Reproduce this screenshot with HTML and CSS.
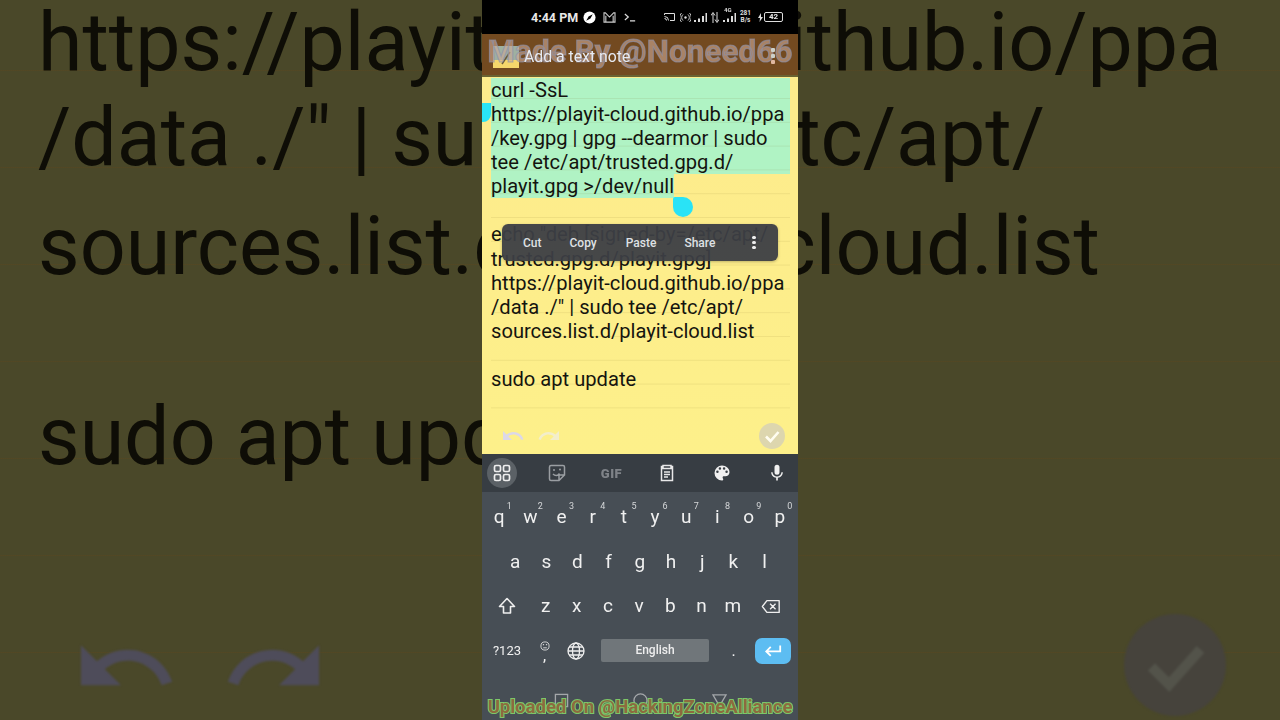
FILE: index.html
```html
<!DOCTYPE html>
<html lang="en">
<head>
<meta charset="utf-8">
<title>Add a text note</title>
<link rel="stylesheet" href="styles.css">
</head>
<body>
<div class="stage">
  <aside class="side side-left">
    <div class="bg-row bg-row1">https://playit</div>
    <div class="bg-row bg-row2">/data ./" | su</div>
    <div class="bg-row bg-row3">sources.list.d</div>
    <div class="bg-row bg-row4">sudo apt upd</div>
    <div class="bg-tools">
      <svg class="bg-icon" viewBox="0 0 24 24"><path d="M12.5 8c-2.65 0-5.05.99-6.9 2.6L2 7v9h9l-3.62-3.62c1.39-1.16 3.16-1.88 5.12-1.88 3.54 0 6.55 2.31 7.6 5.5l2.37-.78C21.08 11.03 17.15 8 12.5 8z"/></svg>
      <svg class="bg-icon" viewBox="0 0 24 24"><path d="M18.4 10.6C16.55 8.99 14.15 8 11.5 8c-4.65 0-8.58 3.03-9.96 7.22L3.9 16c1.05-3.19 4.05-5.5 7.6-5.5 1.95 0 3.73.72 5.12 1.88L13 16h9V7l-3.6 3.6z"/></svg>
    </div>
  </aside>

  <main class="phone">
    <div class="status">
      <span class="time">4:44 PM</span>
      <svg class="st st-compass" viewBox="0 0 14 14"><circle cx="7" cy="7" r="6.5" fill="#fff"/><path d="M10.5 3.5 8 8 3.5 10.5 6 6z" fill="#000"/></svg>
      <svg class="st st-mail" viewBox="0 0 14 12"><path d="M1 1h1.500L7 5.500 11.500 1H13v10H1zM3 10.500V4M11 10.500V4" fill="none" stroke="#ccc" stroke-width="1.200"/></svg>
      <svg class="st st-term" viewBox="0 0 14 10"><path d="M1 1l4 3.500L1 8M7 9h6" fill="none" stroke="#ddd" stroke-width="1.400"/></svg>
      <span class="st-spacer"></span>
      <svg class="st st-cast" viewBox="0 0 11 8"><path d="M.5 2V.5h10v7H6M.5 3.500a4 4 0 0 1 4 4M.5 5.500a2 2 0 0 1 2 2" fill="none" stroke="#ddd" stroke-width="1"/></svg>
      <svg class="st st-call" viewBox="0 0 11 9"><circle cx="5.500" cy="4.500" r="1.200" fill="#ddd"/><path d="M3 1.500a4 4 0 0 0 0 6M8 1.500a4 4 0 0 1 0 6M1.500 0a6.500 6.500 0 0 0 0 9M9.500 0a6.500 6.500 0 0 1 0 9" fill="none" stroke="#ddd" stroke-width=".9"/></svg>
      <svg class="st st-sig" viewBox="0 0 13 9"><path d="M0 7h2v2H0zM4 5.500h2V9H4zM8 3h2v6H8zM11.500 0h1.500v9h-1.500z" fill="#ddd"/></svg>
      <svg class="st st-arrows" viewBox="0 0 8 11"><path d="M2 11V2M0 3.500 2 .5l2 3M6 0v9M4 7.500l2 3 2-3" fill="none" stroke="#ddd" stroke-width="1"/></svg>
      <span class="st-4g"><small class="st-4g-l">4G</small><svg class="st st-sig2" viewBox="0 0 13 9"><path d="M0 7h2v2H0zM4 5.500h2V9H4zM8 3h2v6H8zM11.500 0h1.500v9h-1.500z" fill="#ddd"/></svg></span>
      <span class="st-speed">281<br>B/s</span>
      <svg class="st st-bolt" viewBox="0 0 5 9"><path d="M3 0 0 5h2L1.500 9 5 4H3z" fill="#ddd"/></svg>
      <span class="battery">42</span>
    </div>

    <header class="appbar">
      <svg class="app-icon" viewBox="0 0 26 22"><rect width="26" height="22" fill="#f6d76b"/><rect x="0" y="0" width="26" height="14" fill="#9fb0a0"/><path d="M9 18l8-12" stroke="#6b5a3a" stroke-width="1.500"/></svg>
      <div class="watermark-top">Made By @Noneed66</div>
      <span class="app-title">Add a text note</span>
      <span class="app-dots"></span>
    </header>

    <section class="note">
      <div class="line sel">curl -SsL</div>
      <div class="line sel">https://playit-cloud.github.io/ppa</div>
      <div class="line sel">/key.gpg | gpg --dearmor | sudo</div>
      <div class="line sel">tee /etc/apt/trusted.gpg.d/</div>
      <div class="line sel sel-end">playit.gpg &gt;/dev/null</div>
      <div class="line"></div>
      <div class="line">echo "deb [signed-by=/etc/apt/</div>
      <div class="line">trusted.gpg.d/playit.gpg]</div>
      <div class="line">https://playit-cloud.github.io/ppa</div>
      <div class="line">/data ./" | sudo tee /etc/apt/</div>
      <div class="line">sources.list.d/playit-cloud.list</div>
      <div class="line"></div>
      <div class="line">sudo apt update</div>

      <span class="handle handle-start"></span>
      <span class="handle handle-end"></span>

      <div class="menu">
        <span class="menu-item m-cut">Cut</span>
        <span class="menu-item m-copy">Copy</span>
        <span class="menu-item m-paste">Paste</span>
        <span class="menu-item m-share">Share</span>
        <span class="menu-dots"></span>
      </div>

      <div class="note-tools">
        <svg class="tool tool-undo" viewBox="0 0 24 24"><path d="M12.5 8c-2.65 0-5.05.99-6.9 2.6L2 7v9h9l-3.62-3.62c1.39-1.16 3.16-1.88 5.12-1.88 3.54 0 6.55 2.31 7.6 5.5l2.37-.78C21.08 11.03 17.15 8 12.5 8z"/></svg>
        <svg class="tool tool-redo" viewBox="0 0 24 24"><path d="M18.4 10.6C16.55 8.99 14.15 8 11.5 8c-4.65 0-8.58 3.03-9.96 7.22L3.9 16c1.05-3.19 4.05-5.5 7.6-5.5 1.95 0 3.73.72 5.12 1.88L13 16h9V7l-3.6 3.6z"/></svg>
        <span class="tools-gap"></span>
        <span class="done">
          <svg viewBox="0 0 26 26"><path d="M7 13.500l4.500 4.500L19.500 9" fill="none" stroke="#fffdf0" stroke-width="2.600"/></svg>
        </span>
      </div>
    </section>

    <section class="kbd-bar">
      <span class="kb-tool kb-tool-active">
        <svg viewBox="0 0 20 20"><g fill="none" stroke="#eee" stroke-width="1.700"><rect x="2.500" y="2.500" width="6" height="6" rx="1.500"/><rect x="11.500" y="2.500" width="6" height="6" rx="1.500"/><rect x="2.500" y="11.500" width="6" height="6" rx="1.500"/><rect x="11.500" y="11.500" width="6" height="6" rx="1.500"/></g></svg>
      </span>
      <span class="kb-tool">
        <svg viewBox="0 0 20 20"><path d="M4 2.500h12a1.500 1.500 0 0 1 1.500 1.500v8L12 17.500H4A1.500 1.500 0 0 1 2.500 16V4A1.500 1.500 0 0 1 4 2.500zM12 17.500V12h5.500M6 11c2 2 5 2 6.500-.5" fill="none" stroke="#9a9ea2" stroke-width="1.500"/><circle cx="7" cy="7" r="1" fill="#9a9ea2"/><circle cx="13" cy="6.500" r="1" fill="#9a9ea2"/></svg>
      </span>
      <span class="kb-tool kb-gif">GIF</span>
      <span class="kb-tool">
        <svg viewBox="0 0 20 20"><path d="M6 3.500H4.500v14h11v-14H14M6 2.500h8v3H6zM7 9h6M7 11.500h6M7 14h4" fill="none" stroke="#e8e8e8" stroke-width="1.500"/></svg>
      </span>
      <span class="kb-tool">
        <svg viewBox="0 0 24 24"><path fill="#f0f0f0" d="M12 3a9 9 0 0 0 0 18c.83 0 1.500-.67 1.500-1.500 0-.39-.15-.74-.39-1.010-.23-.26-.38-.61-.38-.99 0-.83.67-1.500 1.500-1.500H16c2.760 0 5-2.240 5-5 0-4.420-4.030-8-9-8zm-5.500 9a1.500 1.500 0 1 1 0-3 1.500 1.500 0 0 1 0 3zm3-4a1.500 1.500 0 1 1 0-3 1.500 1.500 0 0 1 0 3zm5 0a1.500 1.500 0 1 1 0-3 1.500 1.500 0 0 1 0 3zm3 4a1.500 1.500 0 1 1 0-3 1.500 1.500 0 0 1 0 3z"/></svg>
      </span>
      <span class="kb-tool">
        <svg viewBox="0 0 24 24"><path fill="#f0f0f0" d="M12 14a3 3 0 0 0 3-3V5a3 3 0 0 0-6 0v6a3 3 0 0 0 3 3zm5.300-3c0 3-2.540 5.100-5.300 5.100S6.700 14 6.700 11H5c0 3.410 2.720 6.230 6 6.720V21h2v-3.280c3.280-.49 6-3.310 6-6.720h-1.700z"/></svg>
      </span>
    </section>

    <section class="keyboard">
      <div class="row row-q">
        <span class="key">q<sup class="num">1</sup></span>
        <span class="key">w<sup class="num">2</sup></span>
        <span class="key">e<sup class="num">3</sup></span>
        <span class="key">r<sup class="num">4</sup></span>
        <span class="key">t<sup class="num">5</sup></span>
        <span class="key">y<sup class="num">6</sup></span>
        <span class="key">u<sup class="num">7</sup></span>
        <span class="key">i<sup class="num">8</sup></span>
        <span class="key">o<sup class="num">9</sup></span>
        <span class="key">p<sup class="num">0</sup></span>
      </div>
      <div class="row row-a">
        <span class="key">a</span><span class="key">s</span><span class="key">d</span><span class="key">f</span><span class="key">g</span><span class="key">h</span><span class="key">j</span><span class="key">k</span><span class="key">l</span>
      </div>
      <div class="row row-z">
        <span class="key key-shift">
          <svg viewBox="0 0 20 20"><path d="M10 2.500 2.500 10.500H6.500V17h7v-6.500h4z" fill="none" stroke="#eee" stroke-width="1.600" stroke-linejoin="round"/></svg>
        </span>
        <span class="key">z</span><span class="key">x</span><span class="key">c</span><span class="key">v</span><span class="key">b</span><span class="key">n</span><span class="key">m</span>
        <span class="key key-del">
          <svg viewBox="0 0 22 18"><path d="M6.500 2.500H20v13H6.500L1.500 9zM10 6l6 6M16 6l-6 6" fill="none" stroke="#eee" stroke-width="1.500" stroke-linejoin="round"/></svg>
        </span>
      </div>
      <div class="row row-sp">
        <span class="key key-sym">?123</span>
        <span class="key key-comma">
          <svg viewBox="0 0 11 11"><g fill="none" stroke="#ddd"><circle cx="5.500" cy="5.500" r="4.500"/><path d="M3.500 7.500h4"/></g><circle cx="3.800" cy="4" r=".8" fill="#ddd"/><circle cx="7.200" cy="4" r=".8" fill="#ddd"/></svg>
          <span class="comma">,</span>
        </span>
        <span class="key key-globe">
          <svg viewBox="0 0 18 18"><g fill="none" stroke="#eee" stroke-width="1.300"><circle cx="9" cy="9" r="8"/><ellipse cx="9" cy="9" rx="3.500" ry="8"/><path d="M1 9h16M2 5h14M2 13h14"/></g></svg>
        </span>
        <span class="space">English</span>
        <span class="key key-dot">.</span>
        <span class="enter">
          <svg viewBox="0 0 20 14"><path d="M18 1.500v6.500H3M7.500 3 2.500 8l5 5" fill="none" stroke="#fff" stroke-width="2"/></svg>
        </span>
      </div>
      <div class="navbar">
        <svg class="nav-ic" viewBox="0 0 16 16"><rect x="1.500" y="1.500" width="13" height="13" fill="none" stroke="#a4a7aa" stroke-width="1.400"/></svg>
        <svg class="nav-ic" viewBox="0 0 16 16"><circle cx="8" cy="8" r="7" fill="none" stroke="#a4a7aa" stroke-width="1.400"/></svg>
        <svg class="nav-ic" viewBox="0 0 16 16"><path d="M1 2h14L8 14z" fill="none" stroke="#a4a7aa" stroke-width="1.400"/></svg>
      </div>
    </section>
    <div class="watermark-bottom">Uploaded On @HackingZoneAlliance</div>
  </main>

  <aside class="side side-right">
    <div class="bg-row bg-row1 r1">ithub.io/ppa</div>
    <div class="bg-row bg-row2 r2">tc/apt/</div>
    <div class="bg-row bg-row3 r3">cloud.list</div>
    <div class="bg-row bg-row4"></div>
    <div class="bg-tools bg-tools-right">
      <span class="bg-done">
        <svg viewBox="0 0 26 26"><path d="M7 13.500l4.500 4.500L19.500 9" fill="none" stroke="#53534a" stroke-width="2.600"/></svg>
      </span>
    </div>
  </aside>
</div>
</body>
</html>
```

FILE: styles.css
```css
* { box-sizing: border-box; }
html, body { margin: 0; padding: 0; height: 100%; }
body { background: #4a4829; font-family: Roboto, "Liberation Sans", sans-serif; overflow: hidden; }

.stage { display: flex; width: 1280px; height: 720px; }

/* blurred, enlarged copy of the video on both sides */
.side {
  flex: 0 0 482px;
  height: 720px;
  overflow: hidden;
  background-color: #4a4829;
  background-image: linear-gradient(to bottom, transparent 96px, rgba(90,70,30,.45) 96px);
  background-size: 100% 97px;
  background-position: 0 -26px;
}
.bg-row {
  display: flex;
  align-items: center;
  white-space: nowrap;
  font-size: 80.7px;
  color: #0e0d06;
  filter: blur(.5px);
  padding-left: 38px;
}
.bg-row1 { height: 84px; }
.bg-row2 { height: 106px; }
.bg-row3 { height: 112px; }
.bg-row4 { height: 274px; align-items: flex-end; padding-bottom: 92px; }
.side-right .bg-row { justify-content: flex-end; padding-left: 0; }
.side-right .r1 { padding-right: 58px; }
.side-right .r2 { padding-right: 235px; }
.side-right .r3 { padding-right: 180px; }
.bg-tools { display: flex; gap: 42px; padding: 38px 0 0 72px; filter: blur(1.2px); }
.bg-icon { width: 107px; height: 107px; fill: #4e4c5a; }
.bg-tools-right { justify-content: flex-end; padding: 38px 54px 0 0; }
.bg-done {
  display: block; width: 102px; height: 102px; border-radius: 50%;
  background: #46433c;
}
.bg-done svg { display: block; width: 102px; height: 102px; }

/* phone */
.phone {
  position: relative;
  flex: 0 0 316px;
  height: 720px;
  display: flex;
  flex-direction: column;
  overflow: hidden;
  filter: blur(.35px);
}

.status {
  height: 34px; flex: none; background: #000; color: #e8e8e8;
  display: flex; align-items: center; padding: 0 15px 0 49px;
}
.time { font-size: 12.5px; font-weight: 700; width: 52px; white-space: nowrap; }
.st { display: block; flex: none; }
.st-compass { width: 13px; height: 13px; }
.st-mail { width: 13px; height: 11px; margin-left: 7px; }
.st-term { width: 12px; height: 9px; margin-left: 8px; }
.st-spacer { flex: 1; }
.st-cast { width: 11px; height: 8px; }
.st-call { width: 11px; height: 9px; margin-left: 5px; }
.st-sig { width: 13px; height: 9px; margin-left: 3px; }
.st-arrows { width: 8px; height: 11px; margin-left: 4px; }
.st-4g { position: relative; display: block; margin-left: 4px; }
.st-4g-l { position: absolute; left: 1px; top: -6px; font-size: 6px; font-weight: 700; color: #ddd; line-height: 6px; }
.st-sig2 { width: 13px; height: 9px; }
.st-speed { font-size: 6.5px; line-height: 7px; font-weight: 700; color: #ddd; text-align: center; margin-left: 3px; width: 13px; }
.st-bolt { width: 5px; height: 9px; margin-left: 6px; }
.battery {
  margin-left: 1px; width: 19px; height: 10px; border: 1px solid #ddd; border-radius: 2px;
  font-size: 8px; line-height: 8px; font-weight: 700; text-align: center; color: #e8e8e8;
}

.appbar {
  position: relative; height: 43px; flex: none; background: #734a20;
  border-bottom: 2px solid #6a6232;
  display: flex; align-items: center; padding: 0 0 0 11px;
}
.app-icon { width: 26px; height: 22px; flex: none; margin-top: 4px; }
.app-title { position: relative; margin-left: 5px; margin-top: 3px; font-size: 15.8px; color: #e6eaf2; white-space: nowrap; }
.app-dots {
  position: absolute; left: 289px; top: 14px; width: 4px; height: 4px; border-radius: 1px;
  background: #cdd0c9; box-shadow: 0 6px 0 #cdd0c9, 0 12px 0 #e0b8a0;
}
.watermark-top {
  position: absolute; left: 0; right: 0; top: -1px; text-align: center; white-space: nowrap;
  font-size: 31.2px; font-weight: 700; line-height: 38px; letter-spacing: .2px;
  color: rgba(205,170,150,.6);
  -webkit-text-stroke: 1.2px rgba(140,145,170,.65);
}

.note {
  position: relative; flex: 0 0 377px;
  background: linear-gradient(#fdeb8c, #fdf08a);
  padding: 1px 8px 0 9px;
}
.note::after {
  content: ""; position: absolute; left: 9px; right: 8px; top: 0; height: 340px;
  background-image: linear-gradient(to bottom, transparent 22.8px, rgba(120,100,30,.1) 22.8px);
  background-size: 100% 23.8px;
  background-position: 0 -1.8px;
  pointer-events: none;
}
.line {
  height: 24.08px; line-height: 25.5px; font-size: 20.15px; color: #14140f; white-space: nowrap;
}
.sel { background: #b0f3c4; }
.sel-end { width: 183px; }

.handle { position: absolute; background: #29e3f6; }
.handle-start { left: 0; top: 26px; width: 9px; height: 19px; border-radius: 0 0 8px 0; }
.handle-end { left: 191px; top: 120px; width: 20px; height: 20px; border-radius: 2px 50% 50% 50%; }

.menu {
  position: absolute; left: 20px; top: 147px; width: 276px; height: 37px;
  background: rgba(60,62,68,.95); border-radius: 6px; color: #dfe1e4;
  font-size: 12px; font-weight: 500;
  display: flex; align-items: center;
  box-shadow: 0 1px 3px rgba(0,0,0,.25);
  z-index: 2;
}
.menu-item { white-space: nowrap; }
.m-cut { margin-left: 21px; }
.m-copy { margin-left: 28px; }
.m-paste { margin-left: 29px; }
.m-share { margin-left: 28px; }
.menu-dots {
  width: 3.5px; height: 3.5px; border-radius: 50%; background: #eee; margin-left: 37px;
  box-shadow: 0 -5px 0 #eee, 0 5px 0 #eee;
}

.note-tools {
  position: absolute; left: 0; right: 0; bottom: 0; height: 36px;
  display: flex; align-items: center; padding: 0 13px 0 19px;
}
.tool { display: block; width: 24px; height: 24px; flex: none; }
.tool-undo { fill: #dcd8e8; }
.tool-redo { fill: #f3eecb; margin-left: 12px; }
.tools-gap { flex: 1; }
.done { display: block; width: 26px; height: 26px; border-radius: 50%; background: #ddd6ae; }
.done svg { display: block; width: 26px; height: 26px; }

.kbd-bar {
  height: 38px; flex: none; background: #373d43;
  display: flex; align-items: center; padding: 0;
}
.kb-tool {
  flex: 0 0 55px; height: 38px; display: flex; align-items: center; justify-content: center;
  position: relative;
}
.kb-tool svg { width: 20px; height: 20px; display: block; position: relative; }
.kb-tool-active { flex: 0 0 47px; }
.kb-tool-active::before {
  content: ""; position: absolute; left: 5px; top: 4px; width: 30px; height: 30px;
  border-radius: 50%; background: #5b6166;
}
.kb-tool-active svg { margin-right: 7px; }
.kb-gif { font-size: 13px; font-weight: 900; color: #7f8388; letter-spacing: .5px; }

.keyboard { flex: 1; background: #474e55; color: #f0f0f0; min-height: 0; }
.row { display: flex; height: 44.5px; align-items: center; }
.row-q { padding-left: 1.5px; margin-top: 3px; }
.row-a { padding-left: 17.5px; }
.row-z { padding-left: 9px; }
.row-sp { padding-left: 9px; }
.key {
  position: relative; flex: 0 0 31.2px; text-align: center; font-size: 19px; line-height: 24px;
  display: block;
}
.num {
  position: absolute; right: 3px; top: -4px; font-size: 9px; line-height: 10px; color: #d5d7d9;
  vertical-align: baseline;
}
.key-shift { flex: 0 0 32px; margin-right: 7px; }
.key-shift svg, .key-del svg { display: block; margin: 0 auto; }
.key-shift svg { width: 20px; height: 20px; }
.key-del { flex: 0 0 22px; margin-left: 12px; }
.key-del svg { width: 20px; height: 17px; }
.key-sym { flex: 0 0 32px; font-size: 13px; margin-right: 6px; }
.key-comma { flex: 0 0 31px; display: flex; flex-direction: column; align-items: center; line-height: 10px; }
.key-comma svg { width: 10px; height: 10px; display: block; }
.comma { font-size: 14px; line-height: 10px; font-weight: 500; }
.key-globe { flex: 0 0 31px; }
.key-globe svg { width: 18px; height: 18px; display: block; margin: 0 auto; }
.space {
  flex: 0 0 108px; height: 23px; margin-left: 10px; background: #70767a; border-radius: 2px;
  font-size: 12px; font-weight: 500; line-height: 23px; text-align: center; color: #eee;
}
.key-dot { flex: 0 0 31px; margin-left: 9px; font-size: 16px; }
.enter {
  flex: 0 0 36px; height: 26px; margin-left: 6px; background: #5dbdf2; border-radius: 7px;
  display: flex; align-items: center; justify-content: center;
}
.enter svg { width: 18px; height: 13px; display: block; }
.navbar {
  display: flex; justify-content: center; gap: 64px; padding-top: 20px;
}
.nav-ic { width: 15px; height: 15px; display: block; }

.watermark-bottom {
  position: absolute; left: 0; right: 0; top: 696px; text-align: center; white-space: nowrap;
  font-size: 18.5px; font-weight: 700; line-height: 22px;
  color: #8d6a3f;
  -webkit-text-stroke: 2.2px #7cc768;
  paint-order: stroke fill;
}
```
